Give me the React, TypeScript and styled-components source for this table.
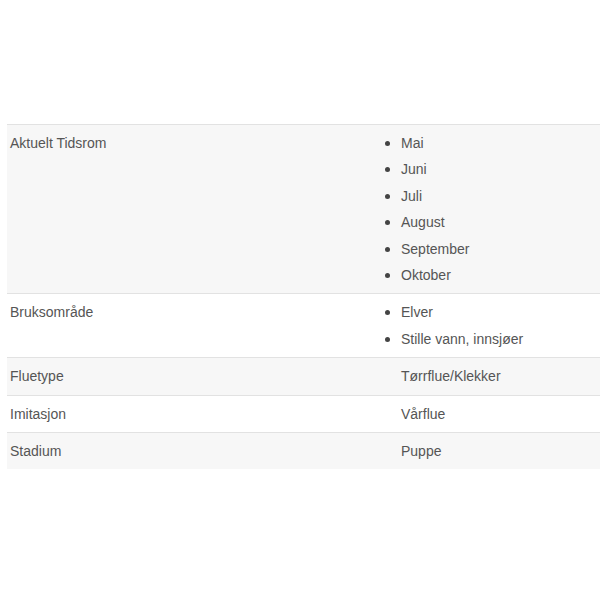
import React from "react";
import styled, { createGlobalStyle } from "styled-components";

const Global = createGlobalStyle`
  html, body { margin: 0; padding: 0; background: #ffffff; }
  body { font-family: "Liberation Sans", Arial, sans-serif; }
`;

const Page = styled.div`
  padding: 124px 0 0 7px;
  width: 600px;
  box-sizing: border-box;
`;

const Table = styled.div`
  display: flex;
  flex-direction: column;
  width: 593px;
  border-top: 1px solid #e2e2e2;
`;

const Row = styled.div<{ $shaded: boolean }>`
  display: grid;
  grid-template-columns: 391px 1fr;
  background: ${(p) => (p.$shaded ? "#f7f7f7" : "#ffffff")};
  border-bottom: 1px solid #e2e2e2;
  &:last-child { border-bottom: none; }
`;

const Cell = styled.div`
  padding: 5px 3px 5px 3px;
  font-size: 14px;
  line-height: 26.4px;
  color: #555555;
`;

const List = styled.ul`
  margin: 0;
  padding: 0;
  list-style: disc outside;
  & li::marker { color: #444444; font-size: 16px; }
`;

const Item = styled.li`
  padding-left: 0;
`;

type Spec = { label: string; values: string[]; list: boolean };

const rows: Spec[] = [
  { label: "Aktuelt Tidsrom", values: ["Mai", "Juni", "Juli", "August", "September", "Oktober"], list: true },
  { label: "Bruksområde", values: ["Elver", "Stille vann, innsjøer"], list: true },
  { label: "Fluetype", values: ["Tørrflue/Klekker"], list: false },
  { label: "Imitasjon", values: ["Vårflue"], list: false },
  { label: "Stadium", values: ["Puppe"], list: false },
];

export default function App() {
  return (
    <>
      <Global />
      <Page>
        <Table>
          {rows.map((r, i) => (
            <Row key={r.label} $shaded={i % 2 === 0}>
              <Cell>{r.label}</Cell>
              <Cell>
                {r.list ? (
                  <List>
                    {r.values.map((v) => (
                      <Item key={v}>{v}</Item>
                    ))}
                  </List>
                ) : (
                  r.values[0]
                )}
              </Cell>
            </Row>
          ))}
        </Table>
      </Page>
    </>
  );
}
